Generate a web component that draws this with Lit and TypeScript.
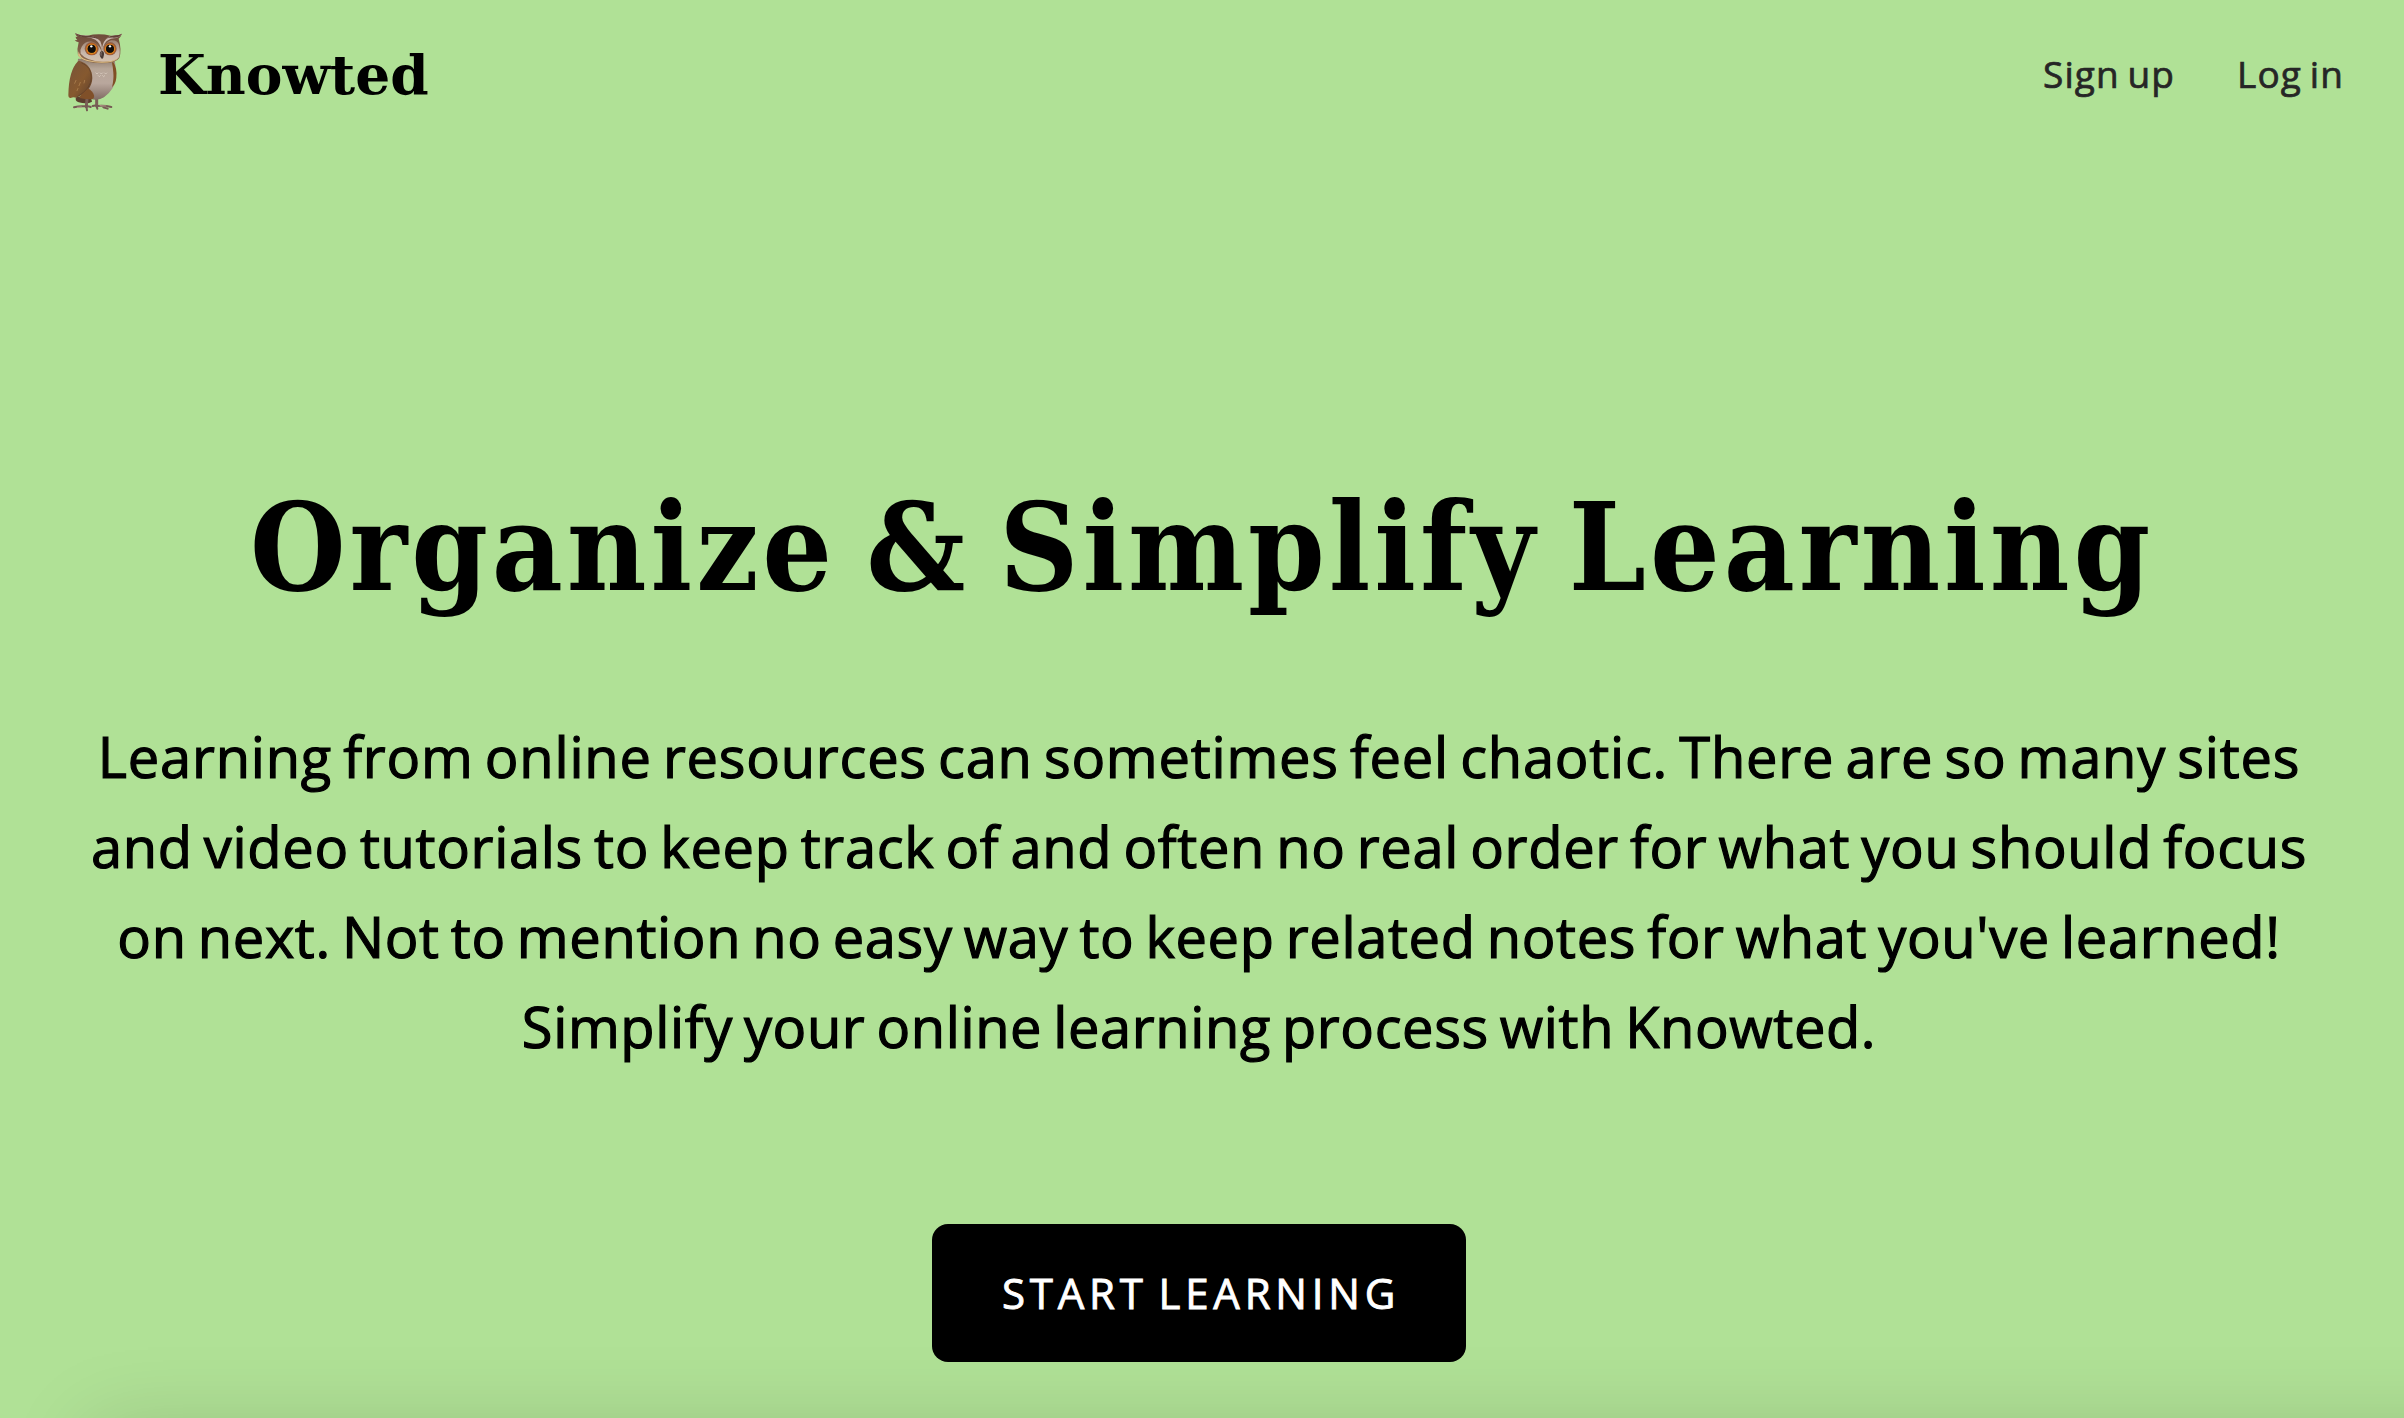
import { LitElement, html, css } from "lit";
import { customElement } from "lit/decorators.js";

@customElement("owl-logo")
class OwlLogo extends LitElement {
  static styles = css`
    :host { display: block; width: 90px; height: 100px; }
    svg { display: block; }
  `;
  render() {
    return html`<svg width="90" height="100" viewBox="0 12 270 300" aria-hidden="true">
      <defs>
        <linearGradient id="wing" x1="0" y1="0" x2="1" y2="1">
          <stop offset="0" stop-color="#775339" /><stop offset=".55" stop-color="#86592f" /><stop offset="1" stop-color="#5d3f2c" />
        </linearGradient>
        <linearGradient id="belly" x1="0" y1="0" x2="0" y2="1">
          <stop offset="0" stop-color="#8d7a6c" /><stop offset=".25" stop-color="#b7a698" /><stop offset=".6" stop-color="#b9a79d" /><stop offset="1" stop-color="#806c63" />
        </linearGradient>
        <linearGradient id="head" x1="0" y1="0" x2="0" y2="1">
          <stop offset="0" stop-color="#6e4b3b" /><stop offset="1" stop-color="#8e6c4e" />
        </linearGradient>
        <linearGradient id="face" x1="0" y1="0" x2="0" y2="1">
          <stop offset="0" stop-color="#9d8171" /><stop offset=".6" stop-color="#c9b8ab" /><stop offset="1" stop-color="#d4c0ae" />
        </linearGradient>
        <radialGradient id="iris">
          <stop offset=".5" stop-color="#2c1608" /><stop offset=".75" stop-color="#d98a22" /><stop offset="1" stop-color="#b8501c" />
        </radialGradient>
      </defs>
      <path d="M78 232q-4 12 8 15q26 6 40-2l-6-22z" fill="#5a3d2d" />
      <path d="M111 236l-2 24M140 236l0 22" stroke="#7b5f56" stroke-width="9" stroke-linecap="round" />
      <path d="M72 262q18-5 34-3M109 258l2 13M113 259q5 0 9 2M140 258l2 8M142 258q22-2 42 3M128 258q8-3 14 0M160 262l13 4" fill="none" stroke="#755a53" stroke-width="6" stroke-linecap="round" />
      <path d="M82 262l12-1M150 257l18 1" stroke="#b6988c" stroke-width="3" stroke-linecap="round" />
      <path d="M84 116Q74 210 120 236q24 8 42-4q34-26 36-58q2-24-4-54z" fill="url(#belly)" />
      <path d="M189 125q13 18 10 48q-2 18-13 29q6-26 4-44q-1-17-4-30z" fill="#805025" />
      <path d="M84 124Q56 152 55 226q0 10 7 8q8-4 16-1Q126 214 127 174Q126 134 88 122z" fill="url(#wing)" />
      <path d="M112 204q-20 18-24 30q16 4 36 4q10-2 8-12q-4-14-20-22z" fill="#805029" />
      <path d="M94 128q30 12 30 44q0 34-42 58" fill="none" stroke="#5b3d2b" stroke-width="3" opacity=".65" />
      <path d="M78 181l-4 9M91 187l-4 10M104 181l-2 8M84 205l-3 7" stroke="#b28451" stroke-width="3" stroke-linecap="round" opacity=".75" />
      <path d="M137 158l4 4l4-4M150 158l4 4l4-4M163 158l4 4l4-4M144 166l4 4l4-4M157 166l4 4l4-4" fill="none" stroke="#ddd0c4" stroke-width="3" opacity=".75" />
      <path d="M75 40q18 9 37 7q34-8 70 0q18 3 34-6q-4 10-10 15q10 34 2 58q-10 16-54 16q-54-1-70-24q-4-20 2-39q-8-2-12-6l8-1q-6-6-5-10l6 1q-6-5-8-11z" fill="url(#head)" />
      <path d="M95 80q10-18 32-15q20 6 28 30q8-28 28-34q20-2 24 14q5 22-1 38q-12 13-50 12q-46-2-64-24q-3-12 3-21z" fill="url(#face)" />
      <path d="M86 94q4 20 24 25q24 7 50 6q30 0 45-12q-10 15-50 15q-56 0-71-22z" fill="#dfbd84" />
      <path d="M108 46q30 2 43 18q5 10 5 26q1-20 10-30q10-13 28-14q14 0 22-5q-9 13-24 14q-20 2-28 16q-6 10-8 24q-5-26-20-36q-14-7-28-8q-22 0-33-11q17 7 33 6z" fill="#c9b6ad" />
      <path d="M75 40q18 9 38 7q22 1 32 9q-22-6-38-4q-20 0-32-12zM168 56q14-10 28-10q12 0 20-5q-8 12-24 12q-14-1-24 3z" fill="#604036" />
      <ellipse cx="125" cy="86" rx="21" ry="20" fill="#8e6249" />
      <ellipse cx="180" cy="86" rx="20" ry="20" fill="#8e6249" />
      <circle cx="125" cy="87" r="18" fill="url(#iris)" />
      <circle cx="180" cy="87" r="17.5" fill="url(#iris)" />
      <circle cx="125" cy="86" r="12" fill="#100c0a" />
      <circle cx="180" cy="86" r="12" fill="#100c0a" />
      <circle cx="124" cy="79" r="3.5" fill="#fff" />
      <circle cx="180" cy="79" r="3.5" fill="#fff" />
      <path d="M155 92q8 2 7 12q-1 10-6 13q-6-4-7-13q-1-9 6-12z" fill="#493a36" />
      <path d="M154 96q-2 5-1 10" stroke="#94827c" stroke-width="2.5" fill="none" stroke-linecap="round" />
    </svg>`;
  }
}

@customElement("app-root")
class AppRoot extends LitElement {
  static styles = css`
    :host {
      display: block;
      height: 100vh;
      overflow: hidden;
      background: #b0e196;
      color: #000;
      font-family: "Open Sans", "Noto Sans", sans-serif;
    }
    .header {
      display: flex;
      align-items: center;
      height: 148px;
      box-sizing: border-box;
      padding: 0 60px 0 50px;
    }
    .brand {
      margin-left: 18px;
      padding-top: 2px;
      font: 700 55px/80px "DejaVu Serif", serif;
    }
    .nav {
      display: flex;
      gap: 62px;
      margin-left: auto;
    }
    .link {
      font-size: 37px;
      line-height: 50px;
      letter-spacing: 1.1px;
      word-spacing: -3px;
      color: #262626;
      text-decoration: none;
      -webkit-text-stroke: 0.7px currentColor;
    }
    .hero {
      display: flex;
      flex-direction: column;
      align-items: center;
      padding: 319px 6px 0 0;
      text-align: center;
      white-space: nowrap;
    }
    .title {
      margin: 0 0 0 6px;
      font: 700 122px/160px "DejaVu Serif Condensed", "DejaVu Serif", serif;
      letter-spacing: 3.9px;
      word-spacing: -12px;
    }
    .copy {
      display: flex;
      flex-direction: column;
      align-items: center;
      margin: 84px 0 0;
      font-size: 56px;
      line-height: 90px;
      word-spacing: -4.1px;
      -webkit-text-stroke: 1.2px currentColor;
    }
    .one { letter-spacing: 0.783px; }
    .two { letter-spacing: 0.685px; }
    .three { letter-spacing: 0.654px; }
    .four { letter-spacing: 0.612px; }
    .cta {
      margin-top: 153px;
      width: 534px;
      height: 138px;
      padding: 0 0 0 4px;
      border: 0;
      border-radius: 16px;
      background: #000;
      color: #fff;
      font: 400 42px/60px "Open Sans", sans-serif;
      letter-spacing: 4.8px;
      word-spacing: -5px;
      -webkit-text-stroke: 0.9px currentColor;
    }
    .panel {
      height: 400px;
      margin: 56px -200px 0 74px;
      box-shadow: 18px 10px 80px rgba(0, 0, 0, 0.15);
    }
  `;
  render() {
    return html`
      <header class="header">
        <owl-logo></owl-logo>
        <div class="brand">Knowted</div>
        <nav class="nav"><a class="link">Sign up</a><a class="link">Log in</a></nav>
      </header>
      <main class="hero">
        <h1 class="title">Organize &amp; Simplify Learning</h1>
        <p class="copy">
          <span class="one">Learning from online resources can sometimes feel chaotic. There are so many sites</span>
          <span class="two">and video tutorials to keep track of and often no real order for what you should focus</span>
          <span class="three">on next. Not to mention no easy way to keep related notes for what you've learned!</span>
          <span class="four">Simplify your online learning process with Knowted.</span>
        </p>
        <button class="cta">START LEARNING</button>
      </main>
      <div class="panel"></div>
    `;
  }
}
